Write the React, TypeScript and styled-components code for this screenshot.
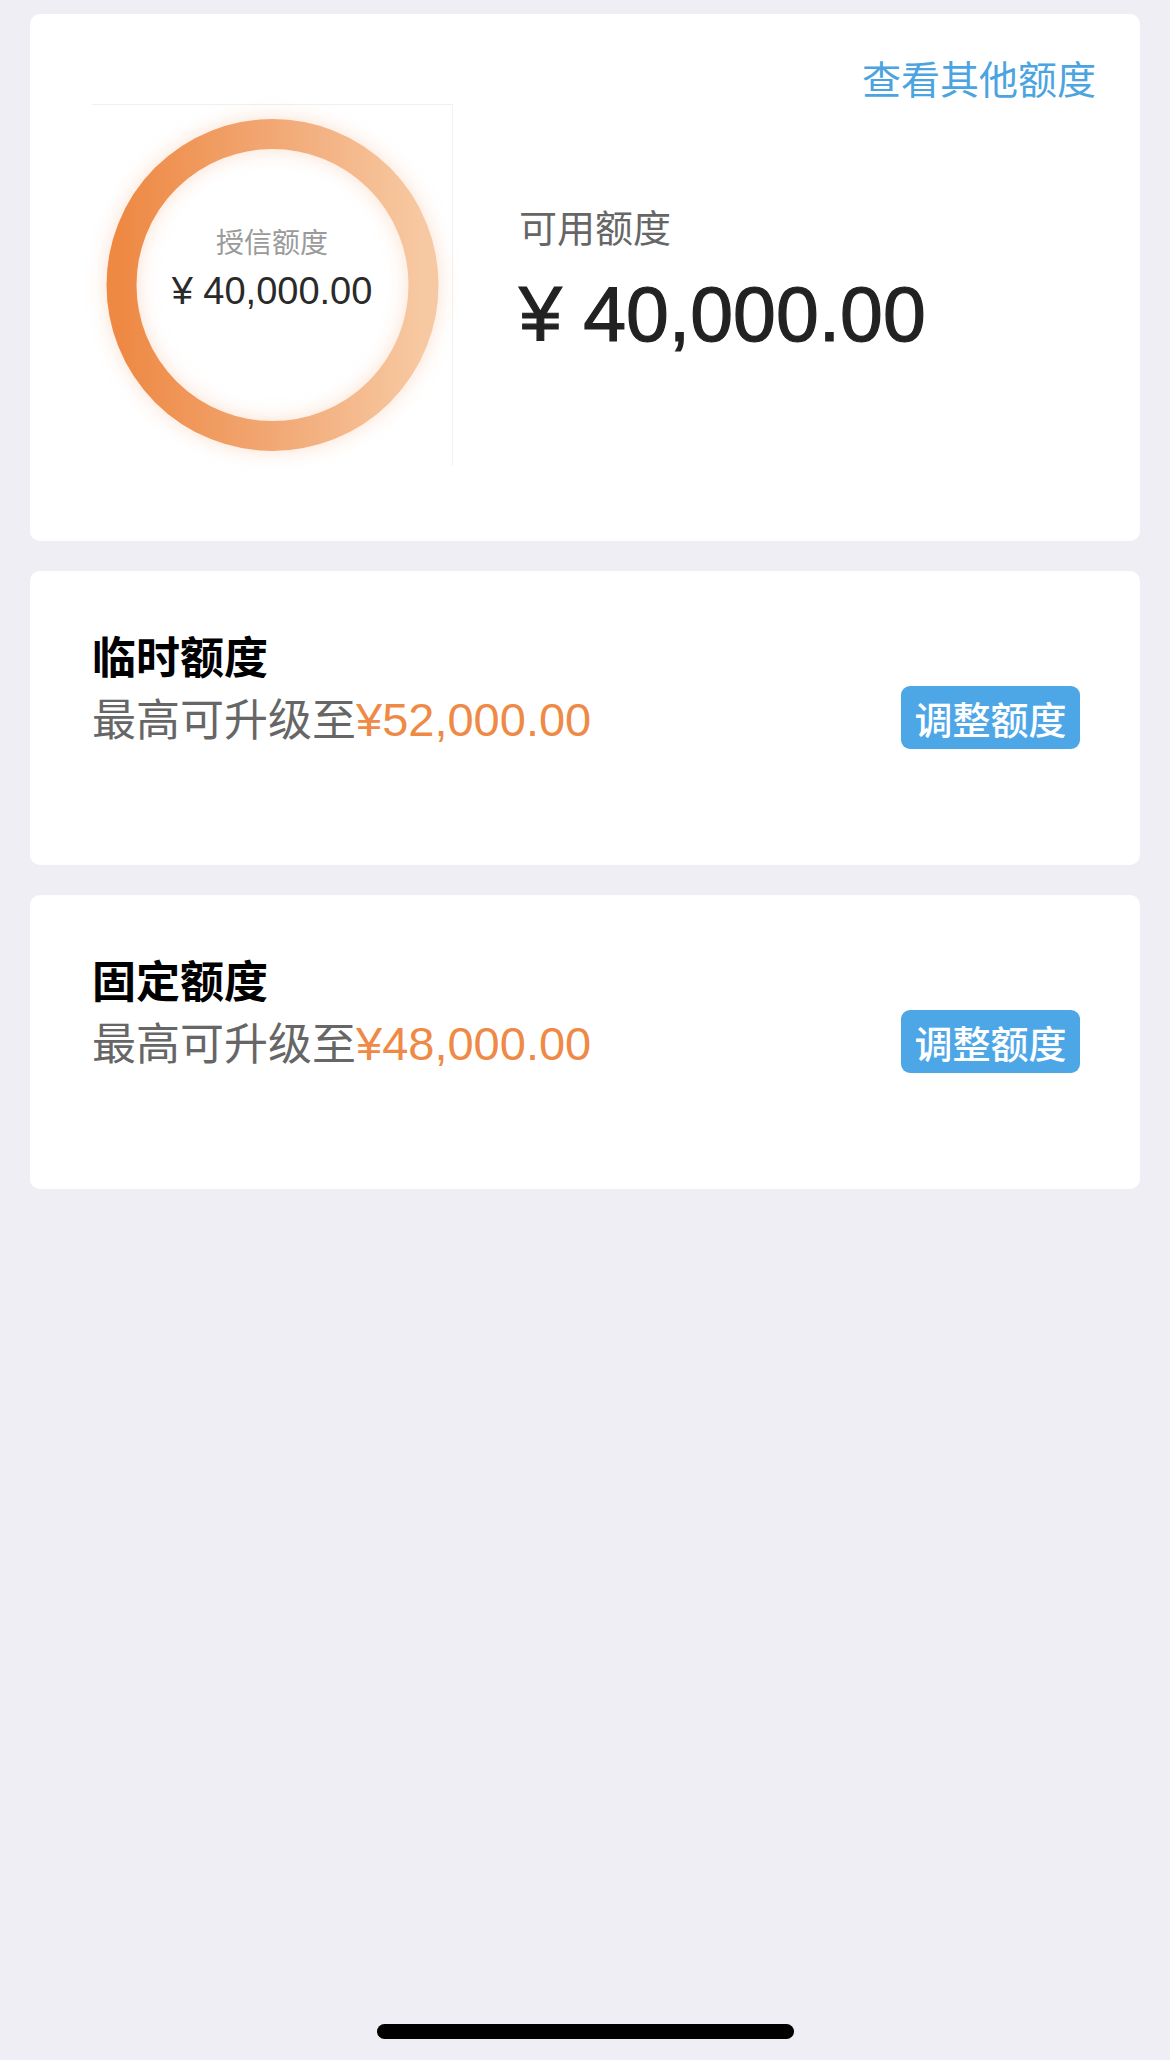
import styled, { createGlobalStyle } from "styled-components";

const GlobalStyle = createGlobalStyle`
  html, body {
    margin: 0;
    padding: 0;
    background: #efeef4;
  }
  body {
    font-family: "Liberation Sans", "Noto Sans CJK SC", sans-serif;
    -webkit-font-smoothing: antialiased;
  }
`;

interface Quota {
  title: string;
  max: string;
}

const quotas: Quota[] = [
  { title: "临时额度", max: "¥52,000.00" },
  { title: "固定额度", max: "¥48,000.00" },
];

const Ring = () => (
  <RingSvg viewBox="0 0 361 362" width="361" height="362">
    <defs>
      <linearGradient id="ringGrad" x1="0" y1="0" x2="1" y2="0">
        <stop offset="0%" stopColor="#ee8944" />
        <stop offset="55%" stopColor="#f2ab79" />
        <stop offset="100%" stopColor="#f7c9a2" />
      </linearGradient>
    </defs>
    <circle
      cx="180.5"
      cy="181"
      r="151"
      fill="none"
      stroke="url(#ringGrad)"
      strokeWidth="30"
    />
  </RingSvg>
);

const App = () => {
  return (
    <>
      <GlobalStyle />
      <Page>
        <SummaryCard>
          <LinkRow>
            <OtherLink>查看其他额度</OtherLink>
          </LinkRow>
          <SummaryRow>
            <ChartBox>
              <Ring />
              <ChartLabel>授信额度</ChartLabel>
              <ChartAmount>¥ 40,000.00</ChartAmount>
            </ChartBox>
            <Available>
              <AvailableLabel>可用额度</AvailableLabel>
              <AvailableAmount>¥ 40,000.00</AvailableAmount>
            </Available>
          </SummaryRow>
        </SummaryCard>

        {quotas.map((q) => (
          <QuotaCard key={q.title}>
            <QuotaText>
              <QuotaTitle>{q.title}</QuotaTitle>
              <QuotaSub>
                最高可升级至<span>{q.max}</span>
              </QuotaSub>
            </QuotaText>
            <AdjustButton>调整额度</AdjustButton>
          </QuotaCard>
        ))}

        <Spacer />
        <HomeBar />
      </Page>
    </>
  );
};

const Page = styled.div`
  min-height: 2060px;
  box-sizing: border-box;
  padding: 14px 30px 21px;
  display: flex;
  flex-direction: column;
  gap: 30px;
`;

const Card = styled.div`
  background: #ffffff;
  border-radius: 10px;
  box-sizing: border-box;
`;

const SummaryCard = styled(Card)`
  height: 527px;
  padding: 44px 44px 0 62px;
  display: flex;
  flex-direction: column;
`;

const LinkRow = styled.div`
  display: flex;
  justify-content: flex-end;
  height: 46px;
`;

const OtherLink = styled.span`
  font-size: 39px;
  line-height: 46px;
  color: #4ba4e0;
`;

const SummaryRow = styled.div`
  display: flex;
  gap: 66px;
`;

const ChartBox = styled.div`
  position: relative;
  width: 361px;
  height: 362px;
  box-sizing: border-box;
  border-top: 1px solid #f0f0f0;
  border-right: 1px solid #f2f2f2;
  display: flex;
  flex-direction: column;
  align-items: center;
  justify-content: center;
  padding-bottom: 33px;
  gap: 7px;
`;

const RingSvg = styled.svg`
  position: absolute;
  left: 0;
  top: -1px;
  filter: drop-shadow(0 0 10px rgba(240, 140, 80, 0.28));
`;

const ChartLabel = styled.div`
  position: relative;
  font-size: 28px;
  line-height: 36px;
  color: #9a9a9a;
`;

const ChartAmount = styled.div`
  position: relative;
  font-size: 38px;
  line-height: 44px;
  color: #2a2a2a;
`;

const Available = styled.div`
  display: flex;
  flex-direction: column;
  padding-top: 102px;
  gap: 17px;
`;

const AvailableLabel = styled.div`
  font-size: 38px;
  line-height: 46px;
  color: #666666;
`;

const AvailableAmount = styled.div`
  font-size: 77px;
  line-height: 90px;
  color: #222222;
  -webkit-text-stroke: 1.2px #222222;
`;

const QuotaCard = styled(Card)`
  height: 294px;
  padding: 58px 60px 0 62px;
  display: flex;
  justify-content: space-between;
  align-items: flex-start;
`;

const QuotaText = styled.div`
  display: flex;
  flex-direction: column;
  gap: 13px;
`;

const QuotaTitle = styled.div`
  font-family: "Noto Sans CJK SC", sans-serif;
  font-size: 44px;
  line-height: 52px;
  font-weight: 700;
  color: #000000;
`;

const QuotaSub = styled.div`
  font-size: 44px;
  line-height: 52px;
  color: #666666;

  span {
    font-size: 47px;
    color: #ee8a46;
  }
`;

const AdjustButton = styled.button`
  margin-top: 57px;
  width: 179px;
  height: 63px;
  border: none;
  border-radius: 9px;
  background: #4da7e7;
  color: #ffffff;
  font-family: "Noto Sans CJK SC", sans-serif;
  font-size: 38px;
  font-weight: 500;
  padding: 0;
  display: flex;
  align-items: center;
  justify-content: center;
`;

const Spacer = styled.div`
  flex: 1;
`;

const HomeBar = styled.div`
  align-self: center;
  width: 417px;
  height: 15px;
  border-radius: 8px;
  background: #000000;
`;

export default App;
